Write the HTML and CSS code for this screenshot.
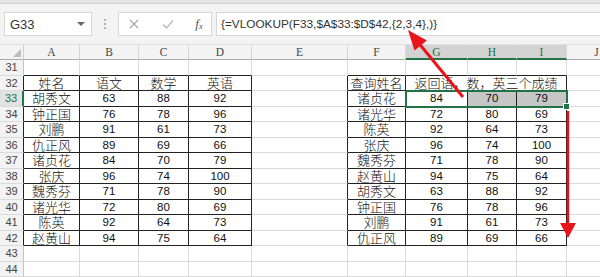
FILE: index.html
```html
<!DOCTYPE html>
<html lang="zh">
<head>
    <meta charset="UTF-8">
    <title>VLOOKUP</title>
    <link rel="stylesheet" href="styles.css">
</head>
<body>
    <div class="screen">
        <div class="topedge"></div>
        <div class="fbar">
            <div class="namebox"><span>G33</span><span class="drop"></span></div>
            <div class="sep"><i></i><i></i><i></i></div>
            <div class="fnbox">
                <span class="icon w30">
                    <svg width="10" height="10" viewBox="0 0 10 10"><path d="M1 1L9 9M9 1L1 9" stroke="#a9a9a9" stroke-width="1.2"/></svg>
                </span>
                <span class="icon w38">
                    <svg width="12" height="10" viewBox="0 0 12 10"><path d="M1 5.5L4.5 9L11 1.5" stroke="#b9b9b9" stroke-width="1.2" fill="none"/></svg>
                </span>
                <span class="icon w24 fx">f<small>x</small></span>
            </div>
            <div class="formula">{=VLOOKUP(F33,$A$33:$D$42,{2,3,4},)}</div>
        </div>

        <!-- worksheet, cells are filled in by the script below -->
        <div class="sheet" id="sheet">
            <div class="selection"><span class="handle"></span></div>
        </div>

        <svg class="arrows" width="600" height="277" viewBox="0 0 600 277">
            <line x1="463" y1="97" x2="417" y2="41" stroke="#e8141c" stroke-width="3"/>
            <polygon points="408,30 426.9,40.4 414.5,50.6" fill="#e8141c"/>
            <line x1="568" y1="111" x2="568" y2="225" stroke="#e8141c" stroke-width="2.5"/>
            <polygon points="560,223 576,223 568,238" fill="#e8141c"/>
        </svg>
    </div>

    <script>
        const letters = ['A', 'B', 'C', 'D', 'E', 'F', 'G', 'H', 'I', 'J'];

        // A32:D42 source table
        const left = [
            ['姓名', '语文', '数学', '英语'],
            ['胡秀文', 63, 88, 92],
            ['钟正国', 76, 78, 96],
            ['刘鹏', 91, 61, 73],
            ['仇正风', 89, 69, 66],
            ['诸贞花', 84, 70, 79],
            ['张庆', 96, 74, 100],
            ['魏秀芬', 71, 78, 90],
            ['诸光华', 72, 80, 69],
            ['陈英', 92, 64, 73],
            ['赵黄山', 94, 75, 64]
        ];

        // F32:I42 lookup table
        const right = [
            ['查询姓名', '返回语，数，英三个成绩'],
            ['诸贞花', 84, 70, 79],
            ['诸光华', 72, 80, 69],
            ['陈英', 92, 64, 73],
            ['张庆', 96, 74, 100],
            ['魏秀芬', 71, 78, 90],
            ['赵黄山', 94, 75, 64],
            ['胡秀文', 63, 88, 92],
            ['钟正国', 76, 78, 96],
            ['刘鹏', 91, 61, 73],
            ['仇正风', 89, 69, 66]
        ];

        const sheet = document.getElementById('sheet');

        function addCell(cls, text) {
            const div = document.createElement('div');
            div.className = cls;
            if (text !== undefined) div.textContent = text;
            sheet.appendChild(div);
            return div;
        }

        // column headers
        addCell('cell corner');
        letters.forEach(function(l) {
            const sel = (l === 'G' || l === 'H' || l === 'I') ? ' sel' : '';
            addCell('cell colhead' + sel, l);
        });

        for (let r = 31; r <= 44; r++) {
            const i = r - 32;
            const inTable = i >= 0 && i <= 10;
            let rh = 'cell rowhead';
            if (inTable) rh += ' edge';
            if (r === 33) rh += ' sel';
            addCell(rh, r);

            for (let c = 0; c < 10; c++) {
                let cls = 'cell';
                let val;
                if (c < 4) {
                    if (r === 31) cls += ' top';
                    if (inTable) { cls += ' tb'; val = left[i][c]; }
                } else if (c === 4) {
                    if (inTable) cls += ' edge';
                } else if (c < 9) {
                    if (r === 31) cls += ' top';
                    if (r === 32) {
                        if (c > 6) continue; // merged into G32
                        if (c === 6) cls += ' merge';
                    }
                    if (inTable) { cls += ' tb'; val = right[i][c - 5]; }
                    if (r === 33 && c > 6) cls += ' hl';
                }
                if (typeof val === 'string') cls += ' zh';
                addCell(cls, val);
            }
        }
    </script>
</body>
</html>
```

FILE: styles.css
```css
body {
    margin: 0;
    font-family: "Liberation Sans", "Noto Sans CJK SC", sans-serif;
    background-color: #ffffff;
    overflow: hidden;
}
.screen {
    position: relative;
    width: 600px;
    height: 277px;
    overflow: hidden;
}
.topedge {
    height: 3px;
    background-color: #e2e2e2;
    border-bottom: 1px solid #d3d3d3;
}
.fbar {
    display: flex;
    align-items: flex-start;
    height: 41px;
    box-sizing: border-box;
    padding: 8px 0 0 4px;
    background-color: #f3f3f3;
    border-bottom: 1px solid #e1e1e1;
}
.namebox {
    width: 88px;
    height: 24px;
    box-sizing: border-box;
    display: flex;
    align-items: center;
    justify-content: space-between;
    padding: 0 6px 0 5px;
    background-color: #ffffff;
    border: 1px solid #d6d6d6;
    font-size: 13px;
    color: #333333;
}
.namebox .drop {
    border: 4px solid transparent;
    border-top: 4px solid #666666;
    border-bottom: none;
}
.sep {
    width: 26px;
    height: 24px;
    display: flex;
    flex-direction: column;
    align-items: center;
    justify-content: center;
    gap: 2px;
}
.sep i {
    width: 2px;
    height: 2px;
    background-color: #b4b4b4;
}
.fnbox {
    width: 94px;
    height: 24px;
    box-sizing: border-box;
    display: flex;
    align-items: center;
    background-color: #ffffff;
    border: 1px solid #d6d6d6;
}
.icon {
    display: flex;
    align-items: center;
    justify-content: center;
}
.w30 { width: 30px; }
.w38 { width: 38px; }
.w24 { width: 24px; }
.fx {
    font-family: "Liberation Serif", serif;
    font-style: italic;
    font-size: 13px;
    color: #555555;
}
.fx small {
    font-size: 9px;
    margin-top: 3px;
}
.formula {
    flex: 1;
    height: 24px;
    box-sizing: border-box;
    margin-left: 4px;
    padding-left: 4px;
    display: flex;
    align-items: center;
    background-color: #ffffff;
    border: 1px solid #d6d6d6;
    border-right: none;
    font-size: 11.8px;
    color: #333333;
    white-space: nowrap;
}

/* worksheet */
.sheet {
    position: relative;
    display: grid;
    grid-template-columns: 24px 56px 59px 50px 63px 96px 58px 62px 49px 50px 60px;
    grid-template-rows: 15px repeat(14, 15.5px);
}
.cell {
    box-sizing: border-box;
    display: flex;
    align-items: center;
    justify-content: center;
    border-right: 1px solid #dadada;
    border-bottom: 1px solid #dadada;
    font-size: 11.5px;
    line-height: 14px;
    color: #111111;
    white-space: nowrap;
}
.zh {
    font-family: "Noto Sans CJK SC", sans-serif;
    font-size: 13px;
    font-weight: 300;
}
.top {
    border-bottom-color: #222222;
}
.edge {
    border-right-color: #222222;
}
.tb {
    border-right-color: #222222;
    border-bottom-color: #222222;
}
.merge {
    grid-column: span 3;
}
.hl {
    background-color: #c6c6c6;
}
.corner {
    background-color: #f3f3f3;
    border-bottom-color: #ababab;
    border-right-color: #cfcfcf;
    justify-content: flex-end;
    align-items: flex-end;
    padding: 0 2px 2px 0;
}
.corner::after {
    content: "";
    border-left: 8px solid transparent;
    border-bottom: 8px solid #bdbdbd;
}
.colhead {
    background-color: #f3f3f3;
    border-bottom-color: #ababab;
    border-right-color: #d6d6d6;
    font-family: "Liberation Serif", serif;
    font-size: 11.5px;
    color: #444444;
}
.colhead.sel {
    background-color: #d3d3d3;
    color: #217346;
    border-bottom: 2px solid #217346;
}
.rowhead {
    background-color: #f3f3f3;
    border-right-color: #c4c4c4;
    font-size: 11px;
    color: #444444;
}
.rowhead.edge {
    border-right-color: #222222;
}
.rowhead.sel {
    background-color: #e2e2e2;
    color: #217346;
    border-right: 2px solid #217346;
}
.selection {
    position: absolute;
    grid-row: 4 / 5;
    grid-column: 8 / 11;
    top: -1px;
    left: -1px;
    right: -1px;
    bottom: -1px;
    border: 2px solid #217346;
    pointer-events: none;
}
.handle {
    position: absolute;
    right: -4px;
    bottom: -4px;
    width: 5px;
    height: 5px;
    background-color: #217346;
    border: 1px solid #ffffff;
}
.arrows {
    position: absolute;
    top: 0;
    left: 0;
}
```
